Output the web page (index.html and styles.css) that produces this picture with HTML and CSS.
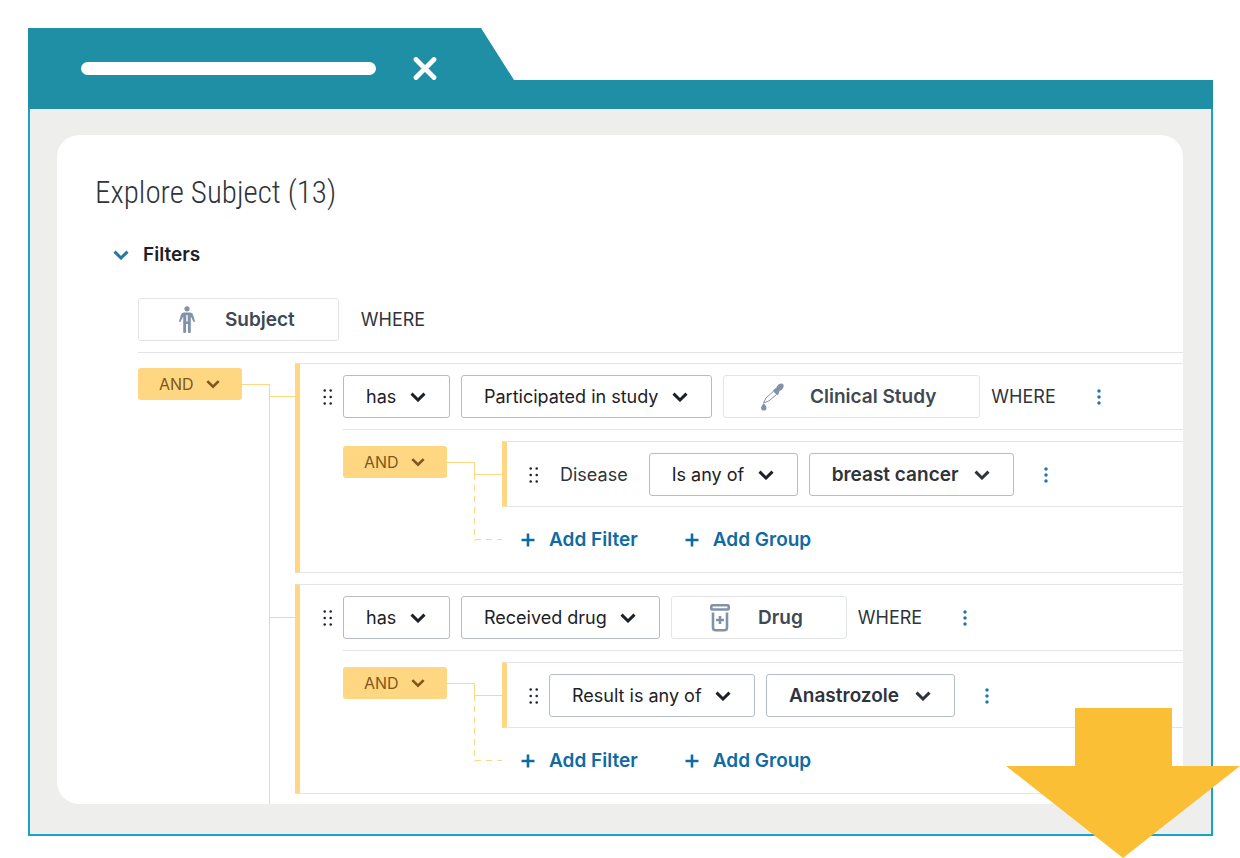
FILE: index.html
```html
<!DOCTYPE html>
<html lang="en">
<head>
<meta charset="utf-8">
<title>Explore Subject</title>
<link rel="stylesheet" href="styles.css">
</head>
<body>
<svg class="sprite" aria-hidden="true">
  <symbol id="chevron" viewBox="0 0 16 10"><path d="M1.500 1.700 8 8l6.500-6.300" fill="none" stroke="currentColor" stroke-width="3"/></symbol>
  <symbol id="plus" viewBox="0 0 14 14"><path d="M7 .5v13M.5 7h13" fill="none" stroke="currentColor" stroke-width="2.600"/></symbol>
  <symbol id="grip" viewBox="0 0 10 18"><g fill="currentColor"><circle cx="2.700" cy="2.500" r="1.250"/><circle cx="8.700" cy="2.500" r="1.250"/><circle cx="2.700" cy="9" r="1.250"/><circle cx="8.700" cy="9" r="1.250"/><circle cx="2.700" cy="15.500" r="1.250"/><circle cx="8.700" cy="15.500" r="1.250"/></g></symbol>
  <symbol id="kebab" viewBox="0 0 6 18"><g fill="currentColor"><circle cx="3" cy="3" r="1.750"/><circle cx="3" cy="9" r="1.750"/><circle cx="3" cy="15" r="1.750"/></g></symbol>
</svg>
<main class="window">
  <header class="tab">
    <div class="tab-title"></div>
    <button class="tab-close" aria-label="Close tab"><svg width="24" height="24" viewBox="0 0 24 24"><path d="M3 2.500l18 18M21 2.500l-18 18" fill="none" stroke="currentColor" stroke-width="4.800" stroke-linecap="round"/></svg></button>
  </header>
  <div class="frame">
    <section class="panel">
      <h1>Explore Subject (13)</h1>
      <button class="filters" aria-expanded="true"><svg class="chevron"><use href="#chevron"/></svg>Filters</button>
      <div class="query">
        <div class="root">
          <div class="entity">
            <svg class="entity-icon" viewBox="0 0 24 28"><g fill="currentColor"><circle cx="12" cy="2.800" r="2.600"/><path d="M9 6.600h6c1.500 0 2.500.8 3 2.200l1.900 6.100c.3 1.100-1.100 1.600-1.600.7l-2.500-5V26.200c0 .9-2.900.9-2.900 0V18h-1.800v8.200c0 .9-2.900.9-2.900 0V10.600l-2.500 5c-.5.900-1.900.4-1.600-.7L6 8.800c.5-1.400 1.500-2.200 3-2.200z"/></g><path d="M12 9v6.500" stroke="#fff" stroke-width="1.400"/></svg>
            <span>Subject</span>
          </div>
          <span class="where">WHERE</span>
        </div>
        <div class="tree">
          <label class="logic"><select aria-label="Combine groups"><option>AND</option></select><svg class="chevron"><use href="#chevron"/></svg></label>
          <div class="rail"></div>
          <div class="branches">
            <div class="branch">
              <div class="tick"></div>
              <section class="group">
                <div class="row">
                  <svg class="grip"><use href="#grip"/></svg>
                  <label class="pick"><select aria-label="Quantifier"><option>has</option></select><svg class="chevron"><use href="#chevron"/></svg></label>
                  <label class="pick"><select aria-label="Relation"><option>Participated in study</option></select><svg class="chevron"><use href="#chevron"/></svg></label>
                  <div class="entity">
                    <svg class="entity-icon" viewBox="0 0 24 28"><g fill="currentColor"><path d="M13.700 6.700 16.400 4.600c1.100-2.600 3.200-4.100 5.300-4 1.700.1 2.400 1.800 1.700 3.600-.7 1.900-2.200 3.200-4 3.900l-1 3.300-1.400.5-4.200-3.800z"/><path d="M3.800 20.300c1.600 1.800 2.700 3.300 2.700 4.600a2.700 2.700 0 0 1-5.400 0c0-1.300 1.100-2.800 2.700-4.600z"/></g><path d="M13 8.700 5.800 15.200 3.600 20l5.400-2.200 7.600-6.300" fill="none" stroke="currentColor" stroke-width="1"/></svg>
                    <span>Clinical Study</span>
                  </div>
                  <span class="where">WHERE</span>
                  <button class="more" aria-label="Group options"><svg><use href="#kebab"/></svg></button>
                </div>
                <div class="tree nested">
                  <label class="logic"><select aria-label="Combine study filters"><option>AND</option></select><svg class="chevron"><use href="#chevron"/></svg></label>
                  <div class="rail"></div>
                  <div class="branches">
                    <div class="branch">
                      <div class="tick"></div>
                      <div class="condition row">
                        <svg class="grip"><use href="#grip"/></svg>
                        <span class="field">Disease</span>
                        <label class="pick"><select aria-label="Disease operator"><option>Is any of</option></select><svg class="chevron"><use href="#chevron"/></svg></label>
                        <label class="pick value"><select aria-label="Disease value"><option>breast cancer</option></select><svg class="chevron"><use href="#chevron"/></svg></label>
                        <button class="more" aria-label="Filter options"><svg><use href="#kebab"/></svg></button>
                      </div>
                    </div>
                    <div class="branch">
                      <div class="tick dashed"></div>
                      <div class="actions">
                        <button class="add"><svg><use href="#plus"/></svg>Add Filter</button>
                        <button class="add"><svg><use href="#plus"/></svg>Add Group</button>
                      </div>
                    </div>
                  </div>
                </div>
              </section>
            </div>
            <div class="branch">
              <div class="tick"></div>
              <section class="group">
                <div class="row">
                  <svg class="grip"><use href="#grip"/></svg>
                  <label class="pick"><select aria-label="Quantifier"><option>has</option></select><svg class="chevron"><use href="#chevron"/></svg></label>
                  <label class="pick"><select aria-label="Relation"><option>Received drug</option></select><svg class="chevron"><use href="#chevron"/></svg></label>
                  <div class="entity">
                    <svg class="entity-icon" viewBox="0 0 24 28"><g fill="none" stroke="currentColor" stroke-width="2.600"><rect x="3.300" y="1.300" width="17.400" height="4.200" rx="1"/><path d="M5 8.500V23.500c0 1.600 1 2.800 2.600 2.800h8.800c1.600 0 2.600-1.200 2.600-2.800V8.500"/><path d="M12 12v8M8 16h8"/></g></svg>
                    <span>Drug</span>
                  </div>
                  <span class="where">WHERE</span>
                  <button class="more" aria-label="Group options"><svg><use href="#kebab"/></svg></button>
                </div>
                <div class="tree nested">
                  <label class="logic"><select aria-label="Combine drug filters"><option>AND</option></select><svg class="chevron"><use href="#chevron"/></svg></label>
                  <div class="rail"></div>
                  <div class="branches">
                    <div class="branch">
                      <div class="tick"></div>
                      <div class="condition row">
                        <svg class="grip"><use href="#grip"/></svg>
                        <label class="pick"><select aria-label="Drug operator"><option>Result is any of</option></select><svg class="chevron"><use href="#chevron"/></svg></label>
                        <label class="pick value"><select aria-label="Drug value"><option>Anastrozole</option></select><svg class="chevron"><use href="#chevron"/></svg></label>
                        <button class="more" aria-label="Filter options"><svg><use href="#kebab"/></svg></button>
                      </div>
                    </div>
                    <div class="branch">
                      <div class="tick dashed"></div>
                      <div class="actions">
                        <button class="add"><svg><use href="#plus"/></svg>Add Filter</button>
                        <button class="add"><svg><use href="#plus"/></svg>Add Group</button>
                      </div>
                    </div>
                  </div>
                </div>
              </section>
            </div>
          </div>
        </div>
      </div>
    </section>
  </div>
  <svg class="arrow" viewBox="0 0 234 150" aria-hidden="true"><path d="M69 0h97v58h68L117 150 0 58h69z" fill="#fbbf36"/></svg>
</main>
</body>
</html>
```
FILE: styles.css
```css
* { box-sizing: border-box; }
body {
  margin: 0;
  background: #fff;
  color: #1c2127;
  font: 18px/24px Inter, "Liberation Sans", sans-serif;
}
button, select {
  margin: 0;
  padding: 0;
  border: 0;
  background: none;
  color: inherit;
  font: inherit;
}
svg { display: block; flex: none; }
.sprite { position: absolute; width: 0; height: 0; }

.window { position: relative; padding: 28px 27px 22px 28px; }
.tab {
  display: flex;
  align-items: center;
  gap: 37px;
  height: 81px;
  padding-left: 53px;
  background: #1f8fa6;
  clip-path: polygon(0 0, 453px 0, 486px 52px, 100% 52px, 100% 100%, 0 100%);
}
.tab-title { width: 295px; height: 13px; border-radius: 7px; background: #fff; }
.tab-close { color: #fff; }
.frame {
  padding: 26px 28px 30px 27px;
  border: 2px solid #14a5c7;
  border-top: 0;
  background: #eeeeec;
}
.panel {
  overflow: hidden;
  padding: 38px 0 0 38px;
  border-radius: 22px;
  background: #fff;
}
h1 {
  margin: 0;
  color: #2f343c;
  font: 300 31px/40px "Roboto Condensed", "Liberation Sans Narrow", sans-serif;
}
.chevron { width: 16px; height: 10px; }
.filters {
  display: flex;
  align-items: center;
  gap: 14px;
  margin: 30px 0 31px 18px;
  font-size: 19px;
  font-weight: 600;
}
.filters .chevron { color: #2477ab; }
.query { margin-left: 43px; }

.root { display: flex; align-items: center; gap: 22px; padding-bottom: 11px; }
.entity {
  display: flex;
  align-items: center;
  gap: 26px;
  height: 43px;
  padding: 0 43px 0 36px;
  border: 1px solid #e1e5eb;
  border-radius: 3px;
  color: #404854;
  font-size: 19px;
  font-weight: 600;
}
.entity-icon { width: 24px; height: 28px; color: #8292a8; }
.where, .field { color: #2f343c; }

.tree {
  display: flex;
  align-items: flex-start;
  padding-top: 10px;
  border-top: 1px solid #e1e5eb;
}
.logic {
  position: relative;
  flex: none;
  width: 104px;
  height: 32px;
  margin-top: 5px;
  border-radius: 3px;
  background: #ffd782;
  color: #80571a;
  font-size: 16px;
}
.logic select { width: 100%; height: 100%; padding-left: 21px; appearance: none; }
.logic .chevron { position: absolute; top: 11px; right: 22px; width: 14px; pointer-events: none; }
.rail {
  align-self: stretch;
  flex: none;
  width: 28px;
  margin-top: 21px;
  border: solid #ffd782;
  border-width: 1px 1px 0 0;
}
.branches { flex: 1; display: grid; gap: 11px; padding-bottom: 10px; }
.branch { display: flex; align-items: flex-start; }
.tick { flex: none; width: 25px; height: 1px; margin-top: 33px; background: #ffd782; }
.group {
  flex: 1;
  padding-top: 11px;
  border: solid #e1e5eb;
  border-width: 1px 0;
  border-left: 5px solid #ffd782;
}
.row { display: flex; align-items: center; gap: 11px; }
.group > .row { padding-left: 22px; }
.grip { width: 10px; height: 18px; }
.pick { position: relative; flex: none; height: 43px; }
.pick select {
  height: 100%;
  padding: 0 52px 0 22px;
  border: 1px solid #b4bcc9;
  border-radius: 3px;
  appearance: none;
}
.pick .chevron { position: absolute; top: 17px; right: 24px; pointer-events: none; }
.value { color: #2f343c; font-size: 19px; font-weight: 600; }
.value select { padding-right: 54px; }
.field { margin: 0 10px 0 11px; }
.more { display: grid; place-items: center; width: 42px; height: 32px; color: #2477ab; }
.more svg { width: 6px; height: 18px; }
.where + .more { margin-left: 11px; }

.nested { margin: 11px 0 0 43px; padding-top: 11px; }
.nested .branches { gap: 0; padding: 0; }
.nested .rail {
  height: 79px;
  align-self: flex-start;
  border-right: 0;
  background:
    linear-gradient(#ffd782, #ffd782) right top / 1px 14px no-repeat,
    repeating-linear-gradient(#ffd782 0 6px, transparent 6px 11px) right top / 1px 100% no-repeat;
}
.nested .tick { width: 27px; }
.nested .tick.dashed {
  margin-top: 32px;
  background: repeating-linear-gradient(90deg, #ffd782 0 6px, transparent 6px 11px);
}
.condition {
  flex: 1;
  padding: 11px 0 10px 21px;
  border: solid #e1e5eb;
  border-width: 1px 0;
  border-left: 5px solid #ffd782;
}
.actions { display: flex; align-items: center; gap: 47px; height: 65px; padding-left: 19px; }
.add { display: flex; align-items: center; gap: 14px; color: #106ba3; font-size: 19px; font-weight: 600; }
.add svg { width: 14px; height: 14px; }

.arrow { position: absolute; right: 0; bottom: 0; width: 234px; height: 150px; }
```
